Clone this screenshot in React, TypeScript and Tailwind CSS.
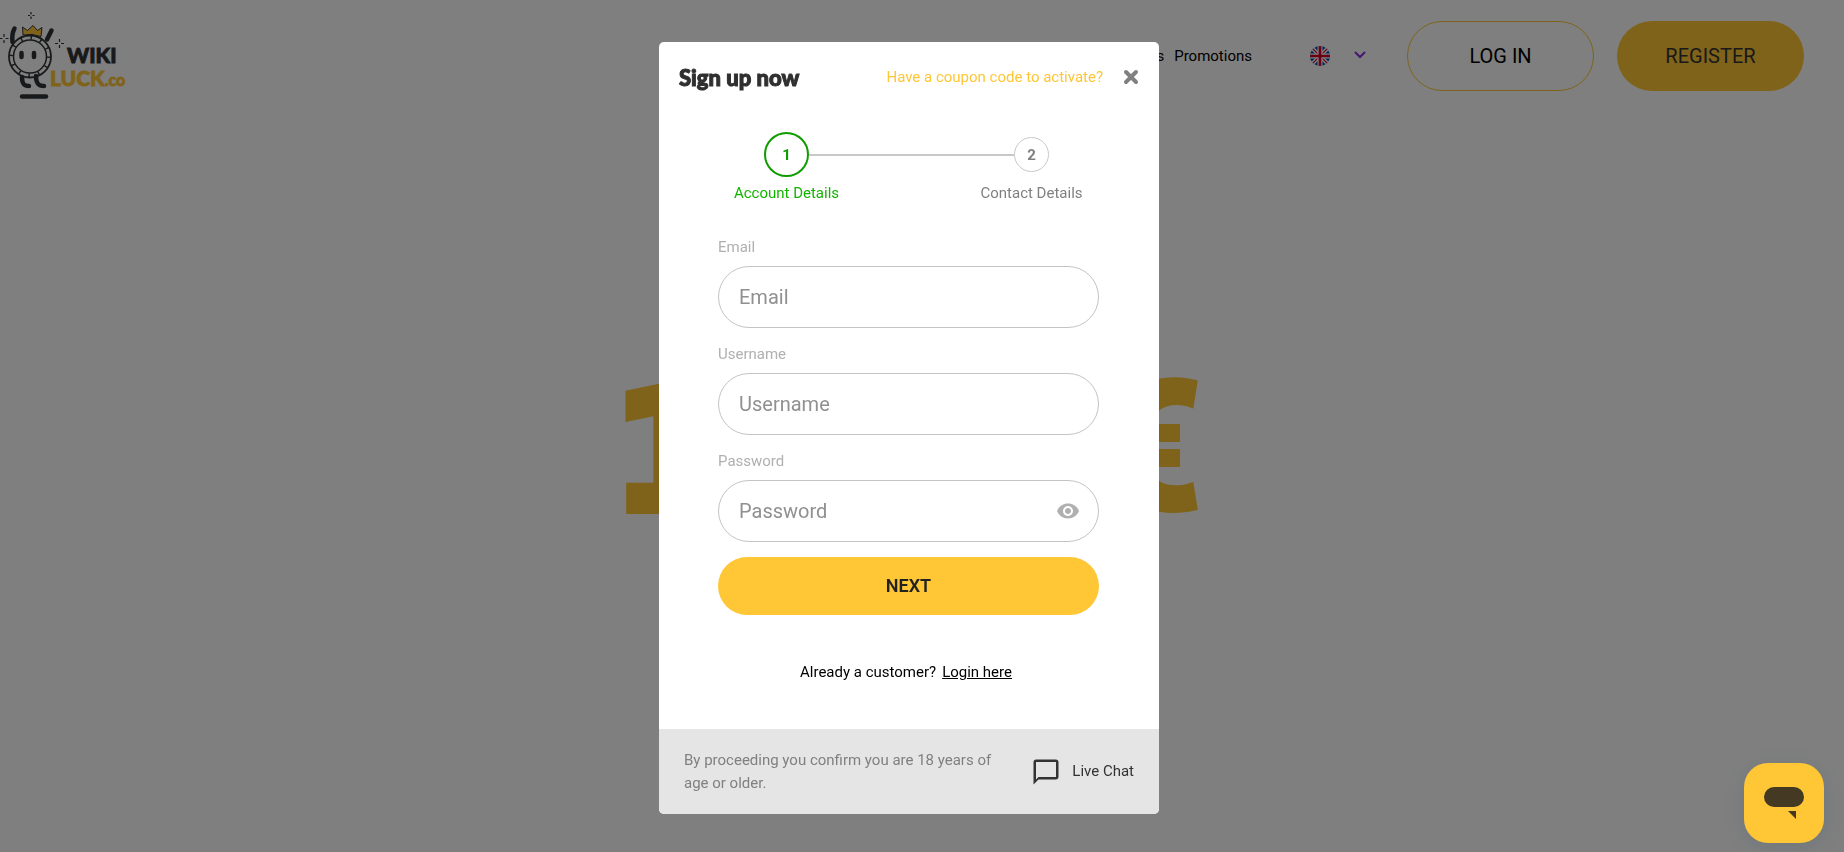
import React, { useState } from "react";
import { MdChatBubbleOutline, MdRemoveRedEye } from "react-icons/md";

const fields = [
  { id: "email", label: "Email", type: "email" },
  { id: "username", label: "Username", type: "text" },
  { id: "password", label: "Password", type: "password" },
];

const Logo = () => (
  <svg width="140" height="110" viewBox="0 0 140 110" fill="none" aria-label="Wiki Luck">
    {/* Sparkles */}
    <g stroke="#333" strokeWidth="1.2">
      <path d="M31 12v2.500M31 16.500v2.500M28 15.500h2M32.500 15.500h2" />
      <path d="M4 34v3M4 40v3M0 38.500h2.500M5.500 38.500h3" />
      <path d="M59.500 39v3M59.500 45v3M55 43.500h3M61 43.500h3" />
    </g>
    {/* Arms and legs */}
    <g stroke="#2f3337" strokeWidth="4.500" strokeLinecap="round" strokeLinejoin="round">
      <path d="M14.500 28.500Q11.500 34 12.500 42" />
      <path d="M51.500 30.500L47 39.500" />
      <path d="M22 77c0 7 2 9 7 9" />
      <path d="M36 76c0 7 2 10 8 10" />
      <path d="M22 96.500h24" />
    </g>
    <path d="M23 35l-.5-8 5 3.500 5.500-5 4.500 5 4.500-3-1 9Q32 33 23 35z" fill="#ffc636" stroke="#333" strokeWidth="1" />
    {/* Coin */}
    <circle cx="30" cy="56.500" r="21" stroke="#2f3337" strokeWidth="1.800" />
    <circle cx="30" cy="56.500" r="16.500" stroke="#2f3337" strokeWidth="1.500" />
    <circle cx="30" cy="56.500" r="18.800" stroke="#2f3337" strokeWidth="4" strokeDasharray="1.500 8.340" />
    <path d="M21.500 53v4M34 53v4" stroke="#2f3337" strokeWidth="4.500" strokeLinecap="round" />
    <g fontFamily="Lato" fontWeight="900" fontSize="21" strokeWidth="0.8">
      <text x="67" y="63" fill="#2f3337" stroke="#2f3337">
        WIKI
      </text>
      <text x="50" y="86" fill="#ffc636" stroke="#ffc636">
        LUCK
        <tspan fontSize="16">.co</tspan>
      </text>
    </g>
  </svg>
);

const Flag = () => (
  <svg width="20" height="20" viewBox="0 0 20 20" aria-hidden="true">
    <clipPath id="round">
      <circle cx="10" cy="10" r="10" />
    </clipPath>
    <g clipPath="url(#round)">
      <path fill="#0052b4" d="M0 0h20v20H0z" />
      <path d="M0 0l20 20M20 0L0 20" stroke="#fff" strokeWidth="4" />
      <path d="M0 0l20 20M20 0L0 20" stroke="#d80027" strokeWidth="1.200" />
      <path d="M10 0v20M0 10h20" stroke="#fff" strokeWidth="5" />
      <path d="M10 0v20M0 10h20" stroke="#d80027" strokeWidth="2.600" />
    </g>
  </svg>
);

const Header = () => (
  <header className="flex h-28 items-center justify-between pr-10">
    <a href="#home" className="self-start">
      <Logo />
    </a>
    <div className="flex items-center">
      <nav className="flex gap-[10px] text-[15px] leading-5">
        <a href="#games">Live Games</a>
        <a href="#promotions">Promotions</a>
      </nav>
      <button className="ml-[58px] flex items-center gap-6" aria-label="Language">
        <Flag />
        <svg width="12" height="10" viewBox="0 0 12 10" fill="none" aria-hidden="true">
          <path d="M1 1l5 5 5-5" stroke="#8a2be2" strokeWidth="2" />
        </svg>
      </button>
      <button className="ml-[41px] h-[70px] w-[187px] rounded-full border border-[#ffc636] text-xl">LOG IN</button>
      <button className="ml-[23px] h-[70px] w-[187px] rounded-full bg-[#ffc636] text-xl text-[#333]">REGISTER</button>
    </div>
  </header>
);

const Steps = () => (
  <div className="mt-5 text-[15px] leading-5">
    <div className="flex items-center pr-[110px] pl-[105px]">
      <span className="flex size-[45px] items-center justify-center rounded-full border-2 border-[#109c00] font-bold text-[#109c00]">
        1
      </span>
      <span className="h-[2px] flex-1 bg-[#c8c8c8]" />
      <span className="flex size-[35px] items-center justify-center rounded-full border border-[#c8c8c8] font-bold text-[#808080]">
        2
      </span>
    </div>
    <div className="mt-[6px] grid grid-cols-2 px-[5px] text-center">
      <span className="text-[#14b400]">Account Details</span>
      <span className="text-[#808080]">Contact Details</span>
    </div>
  </div>
);

const SignUpModal = () => {
  const [showPassword, setShowPassword] = useState(false);

  return (
    <div
      role="dialog"
      aria-labelledby="signup-title"
      className="w-full max-w-[500px] overflow-hidden rounded-[5px] bg-white"
    >
      <div className="flex h-[70px] items-center px-5">
        <h2
          id="signup-title"
          className="flex-1 font-['Lato'] text-[22px] font-black text-[#303030] [-webkit-text-stroke:1px_#303030]"
        >
          Sign up now
        </h2>
        <a href="#coupon" className="text-[15px] text-[#ffc636]">
          Have a coupon code to activate?
        </a>
        <button className="ml-5" aria-label="Close">
          <svg width="16" height="16" viewBox="0 0 16 16" fill="none">
            <path d="M3 3l10 10M13 3L3 13" stroke="#808080" strokeWidth="4" strokeLinecap="round" />
          </svg>
        </button>
      </div>

      <Steps />

      <form className="mt-[34px] pr-[60px] pl-[59px]" onSubmit={(e) => e.preventDefault()}>
        <div className="flex flex-col gap-4">
          {fields.map((field) => (
            <div key={field.id}>
              <label htmlFor={field.id} className="mb-[9px] block text-[15px] leading-5 text-[#b0b0b0]">
                {field.label}
              </label>
              <div className="flex h-[62px] items-center rounded-full border border-[#c4c4c4] pr-[18px] pl-5">
                <input
                  id={field.id}
                  type={field.type === "password" && showPassword ? "text" : field.type}
                  placeholder={field.label}
                  className="min-w-0 flex-1 text-xl outline-none placeholder:text-[#909090]"
                />
                {field.type === "password" && (
                  <button type="button" aria-label="Show password" onClick={() => setShowPassword(!showPassword)}>
                    <MdRemoveRedEye size={24} color="#b0b0b0" />
                  </button>
                )}
              </div>
            </div>
          ))}
        </div>
        <button className="mt-[15px] h-[58px] w-full rounded-full bg-[#ffc636] text-lg font-semibold text-[#222]">
          NEXT
        </button>
      </form>

      <p className="my-[47px] flex justify-center gap-[6px] pr-[6px] text-[15px] leading-5">
        Already a customer?
        <a href="#login" className="underline">
          Login here
        </a>
      </p>

      <div className="flex h-[85px] items-center justify-between bg-[#e5e5e5] px-[25px] text-[15px] leading-[23px]">
        <p className="w-80 text-[#808080]">By proceeding you confirm you are 18 years of age or older.</p>
        <button className="flex items-center gap-[11px] text-[#333]">
          <MdChatBubbleOutline size={30} />
          Live Chat
        </button>
      </div>
    </div>
  );
};

const App = () => {
  return (
    <div className="min-h-screen bg-white font-['Roboto',sans-serif] text-black">
      <Header />

      {/* Welcome bonus */}
      <main className="flex justify-center pt-60 pr-[30px]">
        <h1 className="flex w-[590px] items-baseline justify-between leading-[192px] font-black text-[#ffc636]">
          <span className="font-['DejaVu_Sans'] text-[164px] [-webkit-text-stroke:10px_#ffc636]">1</span>
          <span className="text-[180px] [-webkit-text-stroke:4px_#ffc636]">€</span>
        </h1>
      </main>

      <div className="fixed inset-0 flex items-start justify-center overflow-auto bg-black/50 pt-[42px] pr-[26px]">
        <SignUpModal />
      </div>

      <button
        aria-label="Open chat"
        className="fixed right-5 bottom-[9px] flex size-20 items-center justify-center rounded-3xl bg-[#ffc636] shadow-[0_4px_16px_rgba(90,110,120,0.4)]"
      >
        <svg width="40" height="32" viewBox="0 0 40 32" fill="#443a24">
          <rect width="40" height="20" rx="10" />
          <path d="M24 24h8v8z" />
        </svg>
      </button>
    </div>
  );
};

export default App;
